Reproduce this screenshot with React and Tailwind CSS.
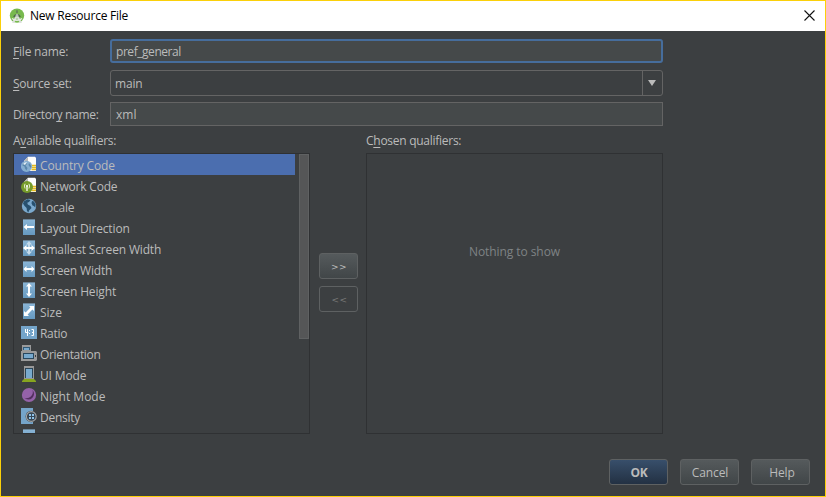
import React from 'react';

const Svg = ({ children }) => (
  <svg width="16" height="16" viewBox="0 0 16 16" className="block shrink-0">{children}</svg>
);

const Tile = ({ children }) => (
  <Svg>
    <defs>
      <linearGradient id="tile" x1="0" y1="0" x2="0" y2="1">
        <stop offset="0" stopColor="#8ab5d6" />
        <stop offset="1" stopColor="#6699c0" />
      </linearGradient>
    </defs>
    <rect x="2" y="0.4" width="12" height="15.6" fill="url(#tile)" />
    {children}
  </Svg>
);

const Doc = () => (
  <>
    <path d="M7 0.8H14L15 1.8V15H3V5z" fill="#fdfdfd" />
    <path d="M7 0.8V5H3z" fill="#b9b9b9" />
    <path d="M10.5 9.5H15M10.5 11.5H15M10.5 13.5H15" stroke="#e3b91d" strokeWidth="1.4" />
  </>
);

const CountryIcon = () => (
  <Svg>
    <Doc />
    <circle cx="5.5" cy="10.3" r="5.6" fill="#86aed0" />
    <path d="M2 7.5L4.5 6.5L6 8L4.5 9.5L6.5 12L5.5 14.5L4 12.5L3.5 10.5L1.5 9.5zM8 7L10 9.5L10 12L8.5 10.5L7.5 9z" fill="#3e6c95" opacity="0.6" />
    <path d="M2 8Q3.5 6 6 6L4 9z" fill="#e4eef6" />
  </Svg>
);

const NetworkIcon = () => (
  <Svg>
    <Doc />
    <circle cx="6" cy="10" r="6" fill="#769b2a" />
    <path d="M6 9.5V14" stroke="#fff" strokeWidth="1.3" />
    <circle cx="6" cy="9" r="1.1" fill="#fff" />
    <path d="M4.1 11.5Q2.7 9 4.1 6.8M7.9 11.5Q9.3 9 7.9 6.8" stroke="#e8f0d4" strokeWidth="1" fill="none" />
  </Svg>
);

const LocaleIcon = () => (
  <Svg>
    <circle cx="8" cy="8" r="7.2" fill="#7ba9cd" />
    <path d="M3 3.2L6.5 1.2L9.5 2L8 4L6.3 4.8L6.8 6.5L9.5 8L10.5 10L8 12.5L7.5 14.5L6 13L5.6 10L3.6 8L2 5.5zM11 3L13 3.5L14.6 6.5L14.3 9.5L12.8 8L11.5 7.5L10.5 5.2z" fill="#27506f" />
  </Svg>
);

const DirectionIcon = () => (
  <Tile><path d="M2.5 8L6 5V7H13V9H6V11z" fill="#fff" /></Tile>
);

const SmallestIcon = () => (
  <Tile>
    <path d="M8 1L11 4.5H9V11.5H11L8 15L5 11.5H7V4.5H5z" fill="#c4daea" />
    <path d="M2 8L5.5 5V7H10.5V5L14 8L10.5 11V9H5.5V11z" fill="#fff" />
  </Tile>
);

const WidthIcon = () => (
  <Tile><path d="M2.5 8L5.5 5V7H10.5V5L13.5 8L10.5 11V9H5.5V11z" fill="#fff" /></Tile>
);

const HeightIcon = () => (
  <Tile><path d="M8 1L11 4.5H9V11.5H11L8 15L5 11.5H7V4.5H5z" fill="#fff" /></Tile>
);

const SizeIcon = () => (
  <Tile><path d="M13 3V8L11.4 6.6L6.6 11.4L8 13H3V8L4.6 9.4L9.4 4.6L8 3z" fill="#fff" /></Tile>
);

const RatioIcon = () => (
  <Svg>
    <rect x="0" y="2" width="16" height="13" fill="#75a5ca" />
    <path d="M4.5 5V8.5H7.5M6.5 5V12M10.5 5.5H12.5V11.5H10.5M11 8.5H12.5" stroke="#fff" strokeWidth="1" fill="none" />
    <path d="M8 6H9V7H8zM8 9H9V10H8z" fill="#fff" />
  </Svg>
);

const OrientationIcon = () => (
  <Svg>
    <path d="M1 0H10V6H1z" fill="#9a9a9a" />
    <path d="M2 2H9V5H2z" fill="#315a78" />
    <path d="M3 3H8V5H3z" fill="#78a9cd" />
    <path d="M0 6H15L16 7V15L15 16H0z" fill="#9a9a9a" />
    <path d="M2 8H13V14H2z" fill="#29485f" />
    <path d="M3 9H12V13H3z" fill="#78a9cd" />
    <path d="M14 10H15V12H14z" fill="#3c3f41" />
  </Svg>
);

const UiModeIcon = () => (
  <Svg>
    <path d="M3 0H13V13H3z" fill="#989898" />
    <path d="M4 2H12V12H4z" fill="#2b4558" />
    <path d="M5 3H11V12H5z" fill="#78a9cd" />
    <path d="M3 13H13L15 15V16H1V15z" fill="#87a51f" />
  </Svg>
);

const NightIcon = () => (
  <Svg>
    <circle cx="8" cy="8" r="7.1" fill="#9462a8" />
    <path d="M11.5 3A5.6 5.6 0 1 1 3.2 10.8A6.3 6.3 0 0 0 11.5 3z" fill="#53305f" />
  </Svg>
);

const DensityIcon = () => (
  <Svg>
    <path d="M0 0H12V16H0z" fill="#75a5ca" />
    <circle cx="10.3" cy="8.5" r="5.7" fill="#3c4144" />
    <circle cx="10.3" cy="8.5" r="4.9" fill="#364653" stroke="#a3a3a3" strokeWidth="1.1" />
    <path d="M8 6H10V8H8zM11 6H13V8H11zM8 9H10V11H8zM11 9H13V11H11z" fill="#8fc2e8" />
  </Svg>
);

const items = [
  ['Country Code', CountryIcon, 'tracking-[-0.15px]'],
  ['Network Code', NetworkIcon, 'tracking-[-0.2px]'],
  ['Locale', LocaleIcon, 'tracking-[-0.25px]'],
  ['Layout Direction', DirectionIcon, 'tracking-[-0.14px]'],
  ['Smallest Screen Width', SmallestIcon, 'tracking-[-0.16px]'],
  ['Screen Width', WidthIcon, 'tracking-[-0.17px]'],
  ['Screen Height', HeightIcon, 'tracking-[-0.15px]'],
  ['Size', SizeIcon, 'tracking-[0px]'],
  ['Ratio', RatioIcon, 'tracking-[-0.3px]'],
  ['Orientation', OrientationIcon, 'tracking-[-0.34px]'],
  ['UI Mode', UiModeIcon, 'tracking-[-0.14px]'],
  ['Night Mode', NightIcon, 'tracking-[0px]'],
  ['Density', DensityIcon, 'tracking-[-0.28px]'],
  ['', Tile, ''],
];

const U = ({ children }) => (
  <span className="underline decoration-1 underline-offset-2 [text-decoration-skip-ink:none]">{children}</span>
);

const Button = ({ children, className }) => (
  <button className={`flex h-[26px] items-center justify-center rounded-[3px] border border-[#5e6162] ${className}`}>{children}</button>
);

export default function App() {
  return (
    <div className="flex h-[497px] w-[826px] flex-col border border-[#fbd009] bg-[#3c3f41] font-['Open_Sans','Noto_Sans',sans-serif] text-[12px] leading-[16px] whitespace-nowrap text-[#bbbbbb]">
      <header className="flex h-[30px] shrink-0 items-center bg-white pr-[10px] pl-[8px] text-black">
        <svg width="16" height="16" viewBox="0 0 16 16" className="mr-[5px] -mt-[1px]">
          <circle cx="8" cy="7.6" r="7.2" fill="#78b94e" />
          <path d="M4.2 9A3.9 3.9 0 0 1 11.8 9z" fill="#4f6b4b" />
          <path d="M8 2.2V5" stroke="#5d7458" strokeWidth="1.4" />
          <path d="M7 7.5L3 14.5L5 15L8 10L11 15L13 14.5L9 7.5z" fill="#d9ded8" />
          <path d="M3 10.5Q8 14 13 10.5" stroke="#e8ece6" strokeWidth="1.3" fill="none" />
          <circle cx="8" cy="7.4" r="1.3" fill="#b9c4b6" />
        </svg>
        <h1 className="grow tracking-[-0.24px]">New Resource File</h1>
        <svg width="11" height="11" viewBox="0 0 11 11" className="-mt-[2px]"><path d="M0.5 0.5L10.5 10.5M10.5 0.5L0.5 10.5" stroke="#111" strokeWidth="1.1" /></svg>
      </header>

      <div className="flex w-[662px] flex-col pt-[8px] pl-[12px]">
        <div className="flex h-[24px] items-center">
          <label className="w-[97px] pt-[2px] tracking-[-0.2px]"><U>F</U>ile name:</label>
          <div className="flex h-[24px] w-[553px] items-center rounded-[3px] border-2 border-[#466d9c] bg-[#45494a] pt-[2px] pl-[4px] tracking-[-0.45px]">pref_general</div>
        </div>
        <div className="mt-[7px] flex h-[26px] items-center">
          <label className="w-[97px] pt-[2px] tracking-[-0.27px]"><U>S</U>ource set:</label>
          <div className="flex h-[26px] w-[553px] items-center rounded-[3px] border border-[#646464]">
            <span className="grow pt-[1px] pl-[4px] tracking-[-0.2px]">main</span>
            <span className="flex h-full w-[20px] items-center justify-center border-l border-[#646464]">
              <svg width="8" height="6" viewBox="0 0 8 6" className="mr-[2px]"><path d="M0 0H8L4 6z" fill="#bbbbbb" /></svg>
            </span>
          </div>
        </div>
        <div className="mt-[6px] flex h-[24px] items-center">
          <label className="w-[97px] pt-[2px] tracking-[-0.27px]">Director<U>y</U> name:</label>
          <div className="flex h-[24px] w-[553px] items-center border border-[#646464] bg-[#45494a] pt-[1px] pl-[5px]">xml</div>
        </div>

        <div className="mt-[6px] flex">
          <section className="w-[297px]">
            <h2 className="h-[21px] pt-[1px] tracking-[-0.24px]">A<U>v</U>ailable qualifiers:</h2>
            <div className="flex h-[281px] justify-between overflow-hidden border border-[#2f3133]">
              <ul className="w-[281px]">
                {items.map(([label, Icon, tracking], i) => (
                  <li key={i} className={`flex h-[21px] shrink-0 items-start gap-[3px] pt-[2px] pl-[7px] ${i === 0 ? 'bg-[#4b6eaf]' : ''}`}>
                    <Icon />
                    <span className={`mt-[2px] ${tracking}`}>{label}</span>
                  </li>
                ))}
              </ul>
              <div className="h-[185px] w-[10px] border border-[#5f6162] bg-[#555657]" />
            </div>
          </section>
          <div className="flex w-[56px] flex-col gap-[7px] pt-[121px] pl-[9px] font-['DejaVu_Sans',sans-serif] text-[9px]">
            <Button className="w-[39px] bg-linear-to-b from-[#555a5c] to-[#414648] pt-[2px] pl-[1px] tracking-[0.5px]">&gt;&gt;</Button>
            <Button className="w-[39px] pt-[2px] pl-[2px] tracking-[0.5px] text-[#777777]">&lt;&lt;</Button>
          </div>
          <section className="w-[297px]">
            <h2 className="h-[21px] pt-[1px] tracking-[-0.27px]">C<U>h</U>osen qualifiers:</h2>
            <div className="flex h-[281px] justify-center border border-[#2f3133] pt-[90px] tracking-[-0.07px] text-[#7f8385]">Nothing to show</div>
          </section>
        </div>
      </div>

      <footer className="mt-[25px] flex gap-[12px] pl-[608px]">
        <Button className="w-[59px] bg-linear-to-b from-[#384f6b] to-[#233143] pt-[1px] pl-[1px] font-bold tracking-[-0.3px]">OK</Button>
        <Button className="w-[59px] bg-linear-to-b from-[#555a5c] to-[#414648] pt-[1px] pl-[1px] tracking-[-0.1px]">Cancel</Button>
        <Button className="w-[59px] bg-linear-to-b from-[#555a5c] to-[#414648] pt-[1px] pl-[3px] tracking-[-0.1px]">Help</Button>
      </footer>
    </div>
  );
}
